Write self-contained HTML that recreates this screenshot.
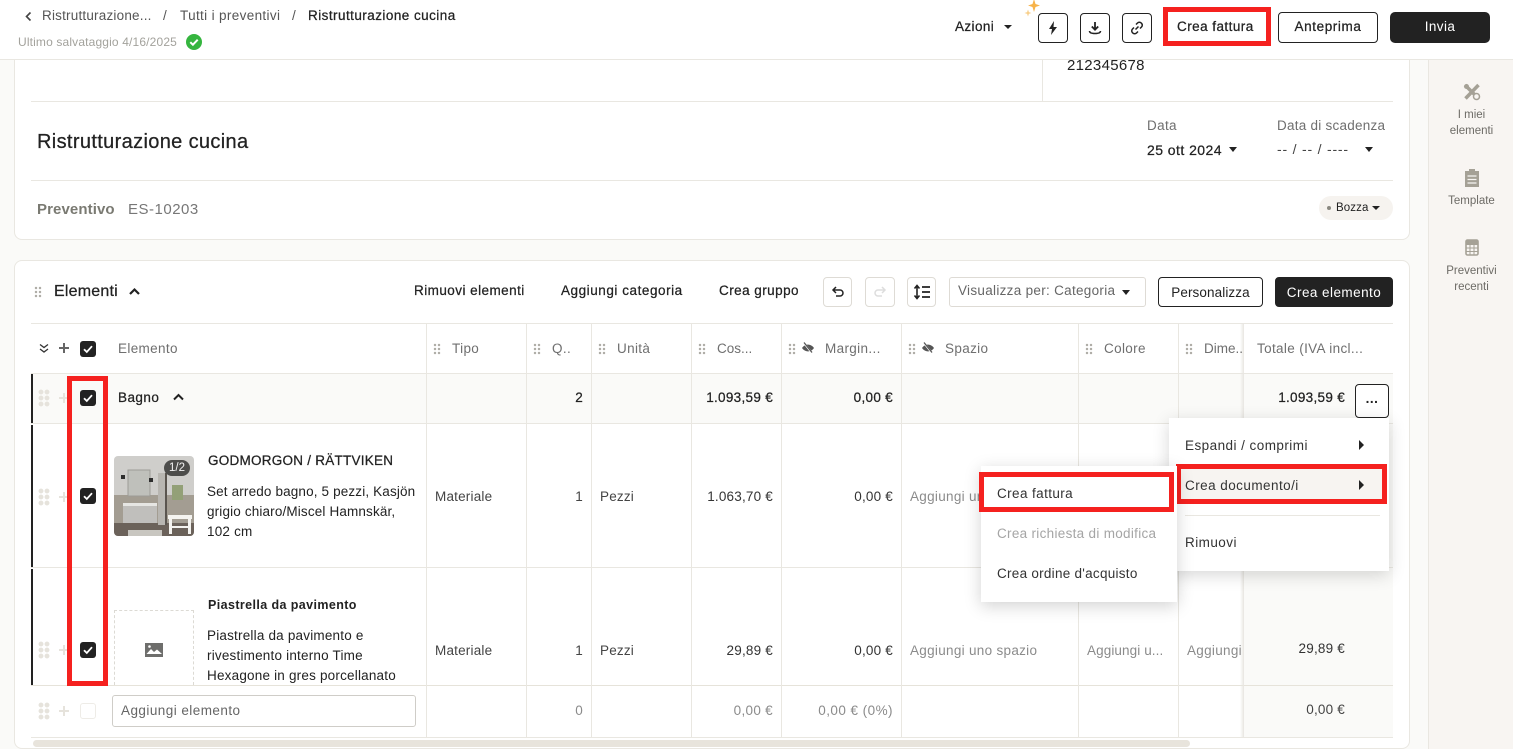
<!DOCTYPE html>
<html lang="it"><head><meta charset="utf-8"><title>Ristrutturazione cucina</title>
<style>
*{box-sizing:border-box}
html,body{margin:0;padding:0;width:1513px;height:749px;overflow:hidden;background:#fafaf8;font-family:"Liberation Sans",sans-serif;color:#222;font-size:13.5px}
#w{position:relative;width:1513px;height:749px;overflow:hidden}
.a{position:absolute}
.t{position:absolute;white-space:nowrap;line-height:20px;height:20px;font-size:13.5px;letter-spacing:.2px;margin-top:1px}
.m{-webkit-text-stroke:.25px currentColor;letter-spacing:.45px}
.m.r{letter-spacing:.3px}
.g{color:#6f6f6f;letter-spacing:.35px}.l{color:#8b8b8b;letter-spacing:.3px}
.mn{letter-spacing:.45px;color:#333}
.sb{font-size:11.5px;letter-spacing:0;color:#6d6b66;left:1430px;width:83px;text-align:center}
.hl{position:absolute;height:1px;background:#e9e7e1}
.vl{position:absolute;width:1px;background:#e9e7e1}
.btn{position:absolute;border:1px solid #222;border-radius:4px;background:#fff;display:flex;align-items:center;justify-content:center;font-size:13.5px;letter-spacing:.4px;white-space:nowrap}
.btn.k{background:#222;color:#fff}
.btn.s{border-color:#dedbd5}
.red{position:absolute;border:5px solid #f5211f}
.grip{position:absolute;width:8px;height:12px;background:radial-gradient(circle,#b0aea8 1.1px,transparent 1.4px) 0 0/4px 4px}
.gr{position:absolute;width:12px;height:18px;background:radial-gradient(circle,#e6e3dc 2.2px,transparent 2.6px) 0 0/6px 6px;left:38px}
.plus{position:absolute;width:10px;height:10px;background:linear-gradient(#e6e3dc,#e6e3dc) center/10px 2px no-repeat,linear-gradient(#e6e3dc,#e6e3dc) center/2px 10px no-repeat;left:59px}
.cb{position:absolute;left:80px;width:16px;height:16px;background:#222;border-radius:3px}
.cb svg{position:absolute;left:3px;top:3px}
.tri{position:absolute;width:0;height:0;border-left:4px solid transparent;border-right:4px solid transparent;border-top:5px solid #222}
.trr{position:absolute;width:0;height:0;border-top:5px solid transparent;border-bottom:5px solid transparent;border-left:5px solid #222}
.r{text-align:right}
</style></head><body><div id="w">

<!-- right sidebar -->
<div class="a" style="left:1428px;top:59px;width:85px;height:690px;background:#f8f5f2;border-left:1px solid #e9e7e1"></div>

<!-- card 1 -->
<div class="a" style="left:14px;top:40px;width:1396px;height:200px;background:#fff;border:1px solid #e9e7e1;border-radius:8px"></div>
<div class="hl" style="left:31px;top:101px;width:1362px"></div>
<div class="vl" style="left:1042px;top:60px;height:41px"></div>
<div class="hl" style="left:31px;top:180px;width:1362px"></div>
<div class="t" style="left:1067px;top:55px;font-size:15px;letter-spacing:.3px">212345678</div>
<div class="t m" style="left:37px;top:131px;font-size:20px;letter-spacing:.35px">Ristrutturazione cucina</div>
<div class="t g" style="left:37px;top:199px;font-size:15px;font-weight:700;color:#7a7a72;letter-spacing:.1px">Preventivo</div>
<div class="t g" style="left:128px;top:199px;font-size:15px;color:#777;letter-spacing:.5px">ES-10203</div>
<div class="t g" style="left:1147px;top:115px">Data</div>
<div class="t m" style="left:1147px;top:139px;font-size:14px;letter-spacing:.45px">25 ott 2024</div>
<div class="tri" style="left:1229px;top:147px"></div>
<div class="t" style="left:1277px;top:138px;font-size:14px;color:#444;letter-spacing:.8px">-- / -- / ----</div>
<div class="t g" style="left:1277px;top:115px;letter-spacing:.25px">Data di scadenza</div>
<div class="tri" style="left:1365px;top:147px"></div>
<div class="a" style="left:1319px;top:196px;width:74px;height:24px;background:#f6f3ef;border-radius:12px"></div>
<div class="a" style="left:1327px;top:206px;width:4px;height:4px;border-radius:50%;background:#8a8880"></div>
<div class="t" style="left:1336px;top:197px;font-size:11.5px;letter-spacing:.1px">Bozza</div>
<div class="tri" style="left:1372px;top:206px;border-left-width:4px;border-right-width:4px;border-top-width:4px"></div>

<!-- card 2 -->
<div class="a" style="left:14px;top:260px;width:1396px;height:489px;background:#fff;border:1px solid #e9e7e1;border-radius:8px"></div>
<div class="grip" style="left:34px;top:286px"></div>
<div class="t m" style="left:54px;top:281px;font-size:16px;letter-spacing:.2px">Elementi</div>
<svg class="a" style="left:128px;top:286px" width="13" height="11" viewBox="0 0 13 11"><path d="M2 8l4.500-4.500L11 8" fill="none" stroke="#222" stroke-width="2.200"/></svg>
<div class="t m" style="left:414px;top:280px">Rimuovi elementi</div>
<div class="t m" style="left:561px;top:280px;letter-spacing:.55px">Aggiungi categoria</div>
<div class="t m" style="left:719px;top:280px">Crea gruppo</div>
<div class="btn s" style="left:823px;top:277px;width:29px;height:30px"><svg width="14" height="14" viewBox="0 0 14 14"><path d="M5 2L2 5l3 3M2.500 5H9a3 3 0 0 1 0 6H5" fill="none" stroke="#222" stroke-width="1.500"/></svg></div>
<div class="btn s" style="left:865px;top:277px;width:30px;height:30px"><svg width="14" height="14" viewBox="0 0 14 14"><path d="M9 2l3 3-3 3M11.500 5H5a3 3 0 0 0 0 6h4" fill="none" stroke="#ddd" stroke-width="1.500"/></svg></div>
<div class="btn s" style="left:907px;top:277px;width:29px;height:30px"><svg width="18" height="16" viewBox="0 0 18 16"><path d="M4 2v12M1.500 4.500L4 1.500l2.500 3M1.500 11.500L4 14.500l2.500-3" fill="none" stroke="#222" stroke-width="1.600"/><path d="M9 3h8M9 8h8M9 13h8" stroke="#222" stroke-width="1.700"/></svg></div>
<div class="a" style="left:949px;top:277px;width:197px;height:30px;border:1px solid #dedbd5;border-radius:3px"></div>
<div class="t" style="left:958px;top:280px;color:#666;letter-spacing:.3px">Visualizza per: Categoria</div>
<div class="tri" style="left:1122px;top:290px"></div>
<div class="btn" style="left:1158px;top:277px;width:105px;height:30px;letter-spacing:.1px">Personalizza</div>
<div class="btn k" style="left:1275px;top:277px;width:118px;height:30px;letter-spacing:.45px">Crea elemento</div>

<!-- table backgrounds -->
<div class="hl" style="left:31px;top:323px;width:1362px"></div>
<div class="a" style="left:31px;top:374px;width:1212px;height:50px;background:#fafaf8"></div>
<div class="a" style="left:1243px;top:374px;width:150px;height:363px;background:#fafaf8"></div>
<div class="hl" style="left:31px;top:373px;width:1362px"></div>
<div class="hl" style="left:31px;top:423px;width:1362px"></div>
<div class="hl" style="left:31px;top:567px;width:1362px"></div>
<div class="hl" style="left:31px;top:685px;width:1362px;background:#e6e3da"></div>
<div class="hl" style="left:31px;top:737px;width:1362px"></div>
<div class="vl" style="left:426px;top:323px;height:414px"></div>
<div class="vl" style="left:526px;top:323px;height:414px"></div>
<div class="vl" style="left:591px;top:323px;height:414px"></div>
<div class="vl" style="left:691px;top:323px;height:414px"></div>
<div class="vl" style="left:781px;top:323px;height:414px"></div>
<div class="vl" style="left:901px;top:323px;height:414px"></div>
<div class="vl" style="left:1078px;top:323px;height:414px"></div>
<div class="vl" style="left:1178px;top:323px;height:414px"></div>
<div class="a" style="left:1240px;top:323px;width:4px;height:414px;background:linear-gradient(90deg,rgba(230,228,222,0),#e8e6e1)"></div>
<div class="a" style="left:31px;top:374px;width:2px;height:49px;background:#222"></div>
<div class="a" style="left:31px;top:425px;width:2px;height:142px;background:#222"></div>
<div class="a" style="left:31px;top:569px;width:2px;height:116px;background:#222"></div>

<!-- header row -->
<svg class="a" style="left:39px;top:343px" width="10" height="11" viewBox="0 0 10 11"><path d="M1 1.500l4 3 4-3M1 6l4 3 4-3" fill="none" stroke="#333" stroke-width="1.300"/></svg>
<div class="plus" style="top:343px;background:linear-gradient(#666,#666) center/10px 2px no-repeat,linear-gradient(#666,#666) center/2px 10px no-repeat"></div>
<div class="cb" style="top:341px"><svg width="10" height="10" viewBox="0 0 10 10"><path d="M1 5.200l2.800 2.800L9 2.200" fill="none" stroke="#fff" stroke-width="1.800"/></svg></div>
<div class="t g" style="left:118px;top:338px">Elemento</div>
<div class="grip" style="left:433px;top:343px"></div><div class="t g" style="left:452px;top:338px">Tipo</div>
<div class="grip" style="left:533px;top:343px"></div><div class="t g" style="left:552px;top:338px">Q..</div>
<div class="grip" style="left:598px;top:343px"></div><div class="t g" style="left:617px;top:338px">Unità</div>
<div class="grip" style="left:698px;top:343px"></div><div class="t g" style="left:717px;top:338px;letter-spacing:0">Cos...</div>
<div class="grip" style="left:788px;top:343px"></div>
<svg class="a" style="left:801px;top:342px" width="14" height="12" viewBox="0 0 14 12"><path d="M1 6c3-4.500 9-4.500 12 0-3 4.500-9 4.500-12 0z" fill="#555"/><path d="M3 1l8 10" stroke="#fff" stroke-width="2"/><path d="M3 .500l8 10" stroke="#555" stroke-width="1.300"/></svg>
<div class="t g" style="left:825px;top:338px">Margin...</div>
<div class="grip" style="left:908px;top:343px"></div>
<svg class="a" style="left:921px;top:342px" width="14" height="12" viewBox="0 0 14 12"><path d="M1 6c3-4.500 9-4.500 12 0-3 4.500-9 4.500-12 0z" fill="#555"/><path d="M3 1l8 10" stroke="#fff" stroke-width="2"/><path d="M3 .500l8 10" stroke="#555" stroke-width="1.300"/></svg>
<div class="t g" style="left:945px;top:338px">Spazio</div>
<div class="grip" style="left:1085px;top:343px"></div><div class="t g" style="left:1104px;top:338px">Colore</div>
<div class="grip" style="left:1185px;top:343px"></div><div class="t g" style="left:1204px;top:338px;letter-spacing:0">Dime..</div>
<div class="t g" style="left:1257px;top:338px">Totale (IVA incl...</div>

<!-- group row -->
<div class="gr" style="top:389px"></div><div class="plus" style="top:393px"></div>
<div class="cb" style="top:390px"><svg width="10" height="10" viewBox="0 0 10 10"><path d="M1 5.200l2.800 2.800L9 2.200" fill="none" stroke="#fff" stroke-width="1.800"/></svg></div>
<div class="t m" style="left:118px;top:387px">Bagno</div>
<svg class="a" style="left:172px;top:392px" width="13" height="10" viewBox="0 0 13 10"><path d="M2 7.500l4.500-4.500L11 7.500" fill="none" stroke="#222" stroke-width="2"/></svg>
<div class="t m r" style="left:540px;top:387px;width:43px">2</div>
<div class="t m r" style="left:680px;top:387px;width:93px">1.093,59 €</div>
<div class="t m r" style="left:800px;top:387px;width:93px">0,00 €</div>
<div class="t m r" style="left:1245px;top:387px;width:100px">1.093,59 €</div>

<!-- row 1 -->
<div class="gr" style="top:488px"></div><div class="plus" style="top:492px"></div>
<div class="cb" style="top:488px"><svg width="10" height="10" viewBox="0 0 10 10"><path d="M1 5.200l2.800 2.800L9 2.200" fill="none" stroke="#fff" stroke-width="1.800"/></svg></div>
<svg class="a" style="left:114px;top:456px;border-radius:4px" width="80" height="80" viewBox="0 0 80 80">
<rect width="80" height="80" fill="#cfcecb"/>
<rect y="39" width="80" height="28" fill="#a39d92"/>
<rect y="67" width="80" height="13" fill="#6b625a"/>
<rect x="14" y="14" width="22" height="26" fill="#bfc0bb" stroke="#9c9c97"/>
<rect x="7" y="19" width="4" height="4" fill="#2e2e2e"/><rect x="35" y="22" width="4" height="4" fill="#2e2e2e"/>
<rect x="9" y="47" width="34" height="20" fill="#c0bfbc"/>
<rect x="9" y="47" width="34" height="3" fill="#e6e6e3"/>
<rect x="44" y="17" width="7" height="52" fill="#b8b6b1"/>
<rect x="51" y="17" width="2" height="52" fill="#5a554f"/>
<rect x="58" y="29" width="11" height="15" fill="#93a077"/>
<rect x="54" y="59" width="24" height="4" fill="#f4f3ef"/><rect x="55" y="63" width="3" height="15" fill="#f4f3ef"/><rect x="74" y="63" width="3" height="15" fill="#f4f3ef"/><rect x="55" y="70" width="21" height="2" fill="#f4f3ef"/>
<rect x="14" y="74" width="34" height="6" fill="#c8c6c0"/>
</svg>
<div class="a" style="left:164px;top:460px;width:26px;height:16px;border-radius:8px;background:#4d4d4b"></div>
<div class="t" style="left:164px;top:457px;width:26px;text-align:center;color:#f2f2f2;font-size:11.5px;letter-spacing:0">1/2</div>
<div class="t m" style="left:208px;top:450px;letter-spacing:.25px">GODMORGON / RÄTTVIKEN</div>
<div class="t" style="left:207px;top:481px;letter-spacing:.15px">Set arredo bagno, 5 pezzi, Kasjön</div>
<div class="t" style="left:207px;top:501px;letter-spacing:.15px">grigio chiaro/Miscel Hamnskär,</div>
<div class="t" style="left:207px;top:521px">102 cm</div>
<div class="t" style="left:435px;top:486px;color:#444">Materiale</div>
<div class="t r" style="left:540px;top:486px;width:43px;color:#444">1</div>
<div class="t" style="left:600px;top:486px;color:#444">Pezzi</div>
<div class="t r" style="left:680px;top:486px;width:93px;color:#333">1.063,70 €</div>
<div class="t r" style="left:800px;top:486px;width:93px;color:#333">0,00 €</div>
<div class="t l" style="left:910px;top:486px">Aggiungi uno spazio</div>
<div class="t" style="left:1245px;top:486px;width:100px;text-align:right;color:#333">1.063,70 €</div>

<!-- row 2 -->
<div class="gr" style="top:641px"></div><div class="plus" style="top:645px"></div>
<div class="cb" style="top:642px"><svg width="10" height="10" viewBox="0 0 10 10"><path d="M1 5.200l2.800 2.800L9 2.200" fill="none" stroke="#fff" stroke-width="1.800"/></svg></div>
<div class="a" style="left:114px;top:610px;width:80px;height:75px;border:1px dashed #dcdad4;border-bottom:0"></div>
<svg class="a" style="left:145px;top:643px" width="18" height="14" viewBox="0 0 18 14"><rect width="18" height="14" fill="#6e6e6c"/><path d="M1.500 11l4.500-5 3 3 3-2.500 5 4.500" fill="#fff"/><circle cx="4.500" cy="3.500" r="1.300" fill="#fff"/></svg>
<div class="t" style="left:208px;top:594px;font-weight:700;font-size:12.5px;letter-spacing:.4px">Piastrella da pavimento</div>
<div class="t" style="left:207px;top:625px">Piastrella da pavimento e</div>
<div class="t" style="left:207px;top:645px">rivestimento interno Time</div>
<div class="t" style="left:207px;top:665px">Hexagone in gres porcellanato</div>
<div class="t" style="left:435px;top:640px;color:#444">Materiale</div>
<div class="t r" style="left:540px;top:640px;width:43px;color:#444">1</div>
<div class="t" style="left:600px;top:640px;color:#444">Pezzi</div>
<div class="t r" style="left:680px;top:640px;width:93px;color:#333">29,89 €</div>
<div class="t r" style="left:800px;top:640px;width:93px;color:#333">0,00 €</div>
<div class="t l" style="left:910px;top:640px">Aggiungi uno spazio</div>
<div class="t l" style="left:1087px;top:640px;letter-spacing:.1px">Aggiungi u...</div>
<div class="t l" style="left:1187px;top:640px;width:54px;overflow:hidden">Aggiungi</div>
<div class="t r" style="left:1245px;top:638px;width:100px;color:#333">29,89 €</div>

<!-- add row -->
<div class="gr" style="top:702px"></div><div class="plus" style="top:706px"></div>
<div class="a" style="left:80px;top:703px;width:16px;height:16px;border:1px solid #eeece7;border-radius:3px"></div>
<div class="a" style="left:112px;top:695px;width:304px;height:32px;border:1px solid #cfcdc8;border-radius:3px;background:#fff"></div>
<div class="t" style="left:121px;top:700px;color:#666;letter-spacing:.45px">Aggiungi elemento</div>
<div class="t l r" style="left:540px;top:700px;width:43px">0</div>
<div class="t l r" style="left:680px;top:700px;width:93px">0,00 €</div>
<div class="t l r" style="left:800px;top:700px;width:93px;letter-spacing:.45px">0,00 € (0%)</div>
<div class="t r" style="left:1245px;top:699px;width:100px;color:#444">0,00 €</div>

<!-- scrollbar -->
<div class="a" style="left:33px;top:740px;width:1157px;height:7px;background:#e8e4dc;border-radius:4px"></div>

<!-- sidebar items -->
<svg class="a" style="left:1463px;top:83px" width="18" height="18" viewBox="0 0 18 18"><path d="M2 2l14 14M15.500 2L2.500 15.500" stroke="#a5a196" stroke-width="3.500"/><circle cx="13.500" cy="13.500" r="3" fill="#f8f5f2" stroke="#a5a196" stroke-width="1.500"/><circle cx="3.500" cy="3.500" r="2.500" fill="#a5a196"/></svg>
<div class="t sb" style="top:104px">I miei</div>
<div class="t sb" style="top:120px">elementi</div>
<svg class="a" style="left:1464px;top:169px" width="16" height="18" viewBox="0 0 16 18"><rect x="1" y="2" width="14" height="16" fill="#a5a196"/><rect x="5" y="0" width="6" height="3" fill="#a5a196"/><path d="M3.500 7h9M3.500 10.500h9M3.500 14h9" stroke="#f8f5f2" stroke-width="1.200"/></svg>
<div class="t sb" style="top:190px">Template</div>
<svg class="a" style="left:1465px;top:239px" width="14" height="18" viewBox="0 0 14 18"><rect x="1" y="1" width="12" height="15" rx="1.500" fill="none" stroke="#a5a196" stroke-width="1.600"/><rect x="1" y="1" width="12" height="5" fill="#a5a196"/><path d="M1 9h12M1 12.500h12M5 6v10M9 6v10" stroke="#a5a196" stroke-width="1"/></svg>
<div class="t sb" style="top:260px">Preventivi</div>
<div class="t sb" style="top:276px">recenti</div>

<!-- header -->
<div class="a" style="left:0;top:0;width:1513px;height:60px;background:#fff;border-bottom:1px solid #e9e7e1"></div>
<svg class="a" style="left:24px;top:11px" width="9" height="11" viewBox="0 0 9 11"><path d="M6.500 1.500L2.500 5.500l4 4" fill="none" stroke="#444" stroke-width="1.600"/></svg>
<div class="t g" style="left:42px;top:5px;color:#555;letter-spacing:.2px">Ristrutturazione...</div>
<div class="t g" style="left:163px;top:5px;color:#555">/</div>
<div class="t g" style="left:180px;top:5px;color:#555">Tutti i preventivi</div>
<div class="t g" style="left:292px;top:5px;color:#555">/</div>
<div class="t m" style="left:308px;top:5px;letter-spacing:.45px">Ristrutturazione cucina</div>
<div class="t" style="left:18px;top:31px;font-size:12px;letter-spacing:.15px;color:#a3a29c">Ultimo salvataggio 4/16/2025</div>
<svg class="a" style="left:186px;top:34px" width="16" height="16" viewBox="0 0 16 16"><circle cx="8" cy="8" r="8" fill="#35b53f"/><path d="M4.300 8.200l2.600 2.500 4.800-5" fill="none" stroke="#fff" stroke-width="2"/></svg>
<div class="t m" style="left:955px;top:16px;letter-spacing:.4px">Azioni</div>
<div class="tri" style="left:1004px;top:25px;border-top-width:4px"></div>
<svg class="a" style="left:1024px;top:0" width="18" height="17" viewBox="0 0 18 17"><path d="M10 -1l1.500 5 4.500 1.500-4.500 1.500L10 12 8.500 7 4 5.500 8.500 4z" fill="#f7b34a"/><path d="M4 9.500l.9 2.600 2.600.9-2.600.9L4 16.500l-.9-2.600L.5 13l2.600-.9z" fill="#f8cf8a"/></svg>
<div class="btn" style="left:1038px;top:13px;width:30px;height:30px"><svg width="10" height="14" viewBox="0 0 10 14"><path d="M6 0L1 8h3l-1 6 6-8H5.500z" fill="#222"/></svg></div>
<div class="btn" style="left:1080px;top:13px;width:30px;height:30px"><svg width="14" height="14" viewBox="0 0 14 14"><path d="M7 1v7M3.800 5.500L7 8.700l3.200-3.200" fill="none" stroke="#222" stroke-width="1.800"/><path d="M1.500 10c0 2 2 2.500 5.500 2.500s5.500-.5 5.500-2.500" fill="none" stroke="#222" stroke-width="1.500"/></svg></div>
<div class="btn" style="left:1122px;top:13px;width:30px;height:30px"><svg width="14" height="14" viewBox="0 0 14 14"><path d="M5.500 8.500l3-3M6 3.500l1.500-1.500a2.600 2.600 0 0 1 3.700 0l.3.300a2.600 2.600 0 0 1 0 3.700L10 7.500M8 10.500L6.500 12a2.600 2.600 0 0 1-3.700 0l-.3-.3a2.600 2.600 0 0 1 0-3.700L4 6.500" fill="none" stroke="#222" stroke-width="1.500"/></svg></div>
<div class="a" style="left:1163px;top:7px;width:108px;height:39px;background:#fff"></div>
<div class="t m" style="left:1177px;top:16px">Crea fattura</div>
<div class="red" style="left:1163px;top:7px;width:108px;height:39px"></div>
<div class="btn m" style="left:1278px;top:12px;width:100px;height:31px;padding-bottom:2px;letter-spacing:.6px">Anteprima</div>
<div class="btn k" style="left:1390px;top:12px;width:100px;height:31px;border-radius:5px;padding-bottom:2px">Invia</div>

<!-- three dot button + menus -->
<div class="btn" style="left:1355px;top:384px;width:34px;height:34px;padding-bottom:6px;font-weight:700;letter-spacing:.5px">...</div>
<div class="a" style="left:1169px;top:418px;width:220px;height:153px;background:#fff;box-shadow:0 4px 16px rgba(0,0,0,.16)"></div>
<div class="a" style="left:1178px;top:466px;width:207px;height:36px;background:#f7f4f1"></div>
<div class="t mn" style="left:1185px;top:435px">Espandi / comprimi</div>
<div class="trr" style="left:1359px;top:440px"></div>
<div class="t mn" style="left:1185px;top:475px">Crea documento/i</div>
<div class="trr" style="left:1359px;top:480px"></div>
<div class="hl" style="left:1185px;top:515px;width:195px"></div>
<div class="t mn" style="left:1185px;top:532px">Rimuovi</div>
<div class="red" style="left:1176px;top:464px;width:211px;height:40px"></div>
<div class="a" style="left:981px;top:466px;width:196px;height:136px;background:#fff;box-shadow:0 4px 16px rgba(0,0,0,.18)"></div>
<div class="t mn" style="left:997px;top:483px;letter-spacing:.4px">Crea fattura</div>
<div class="t" style="left:997px;top:523px;color:#a5a5a5;letter-spacing:.3px">Crea richiesta di modifica</div>
<div class="t mn" style="left:997px;top:563px;letter-spacing:.27px">Crea ordine d'acquisto</div>
<div class="red" style="left:979px;top:472px;width:195px;height:40px"></div>
<div class="red" style="left:67px;top:376px;width:41px;height:310px"></div>

</div></body></html>
